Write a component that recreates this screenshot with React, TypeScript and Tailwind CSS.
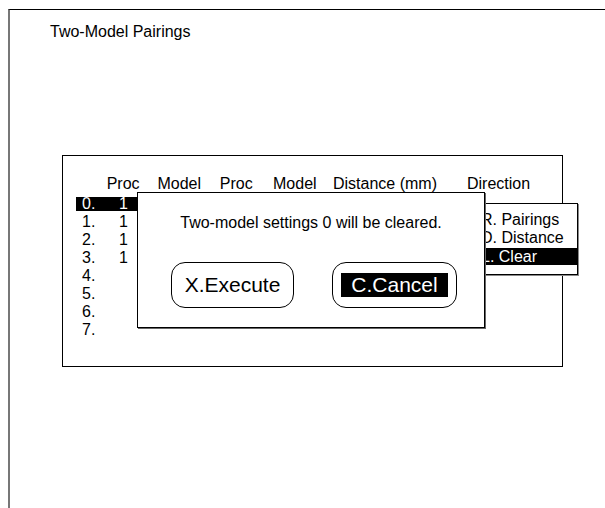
import React from 'react';

const rows = ['0.', '1.', '2.', '3.', '4.', '5.', '6.', '7.'];

const App = () => {
  return (
    <div className="relative w-[605px] h-[508px] bg-white text-black font-['Liberation_Sans',Arial,sans-serif] overflow-hidden">
      {/* Screen frame */}
      <div className="ml-[8px] mt-[9px] h-[499px] border-t border-l-2 border-t-black border-l-[#777]">
        <div className="pl-[40px] pt-[13px] text-[16px] leading-[18px]">Two-Model Pairings</div>

        {/* Pairings table */}
        <div className="ml-[52px] mt-[114px] w-[501px] h-[212px] border border-black">
          <div className="pt-[19px] pl-[13px] text-[16px] leading-[18px]">
            <div className="flex whitespace-nowrap">
              <div className="w-[30px]" />
              <div className="w-[35px] flex justify-center">Proc</div>
              <div className="w-[78px] flex justify-center">Model</div>
              <div className="w-[37px] flex justify-center">Proc</div>
              <div className="w-[81px] flex justify-center">Model</div>
              <div className="w-[100px] flex justify-center">Distance (mm)</div>
              <div className="w-[128px] flex justify-center">Direction</div>
            </div>
            <div className="mt-[2px]">
              {rows.map((r, i) => (
                <div key={r} className="h-[18px] flex items-center">
                  <div className={`flex items-center h-[14px] w-[65px] ${i === 0 ? 'bg-black text-white' : ''}`}>
                    <div className="w-[30px] pl-[6px]">{r}</div>
                    <div className="w-[35px] flex justify-center">{i < 4 ? '1' : ''}</div>
                  </div>
                </div>
              ))}
            </div>
          </div>
        </div>
      </div>

      {/* Side menu */}
      <div className="absolute left-[476px] top-[203px] w-[102px] h-[72px] bg-white border border-black shadow-[1px_1px_0_#888] pt-[7px] text-[16px] leading-[18px] whitespace-nowrap">
        <div className="pl-[4px]">R. Pairings</div>
        <div className="pl-[4px]">D. Distance</div>
        <div className="pl-[4px] mt-[1px] h-[17px] bg-black text-white">L. Clear</div>
      </div>

      {/* Confirmation dialog */}
      <div className="absolute left-[137px] top-[192px] w-[348px] h-[136px] bg-white border border-black shadow-[1px_1px_0_#666]">
        <div className="pt-[21px] text-center text-[16px] leading-[18px] whitespace-nowrap">
          Two-model settings 0 will be cleared.
        </div>
        <div className="mt-[30px] pl-[33px] flex gap-[38px] text-[21px]">
          <div className="w-[123px] h-[46px] border border-black rounded-[14px] flex items-center justify-center">
            X.Execute
          </div>
          <div className="w-[125px] h-[46px] border border-black rounded-[14px] flex items-center justify-center">
            <span className="bg-black text-white px-[10px] h-[24px] leading-[24px]">C.Cancel</span>
          </div>
        </div>
      </div>
    </div>
  );
};

export default App;
